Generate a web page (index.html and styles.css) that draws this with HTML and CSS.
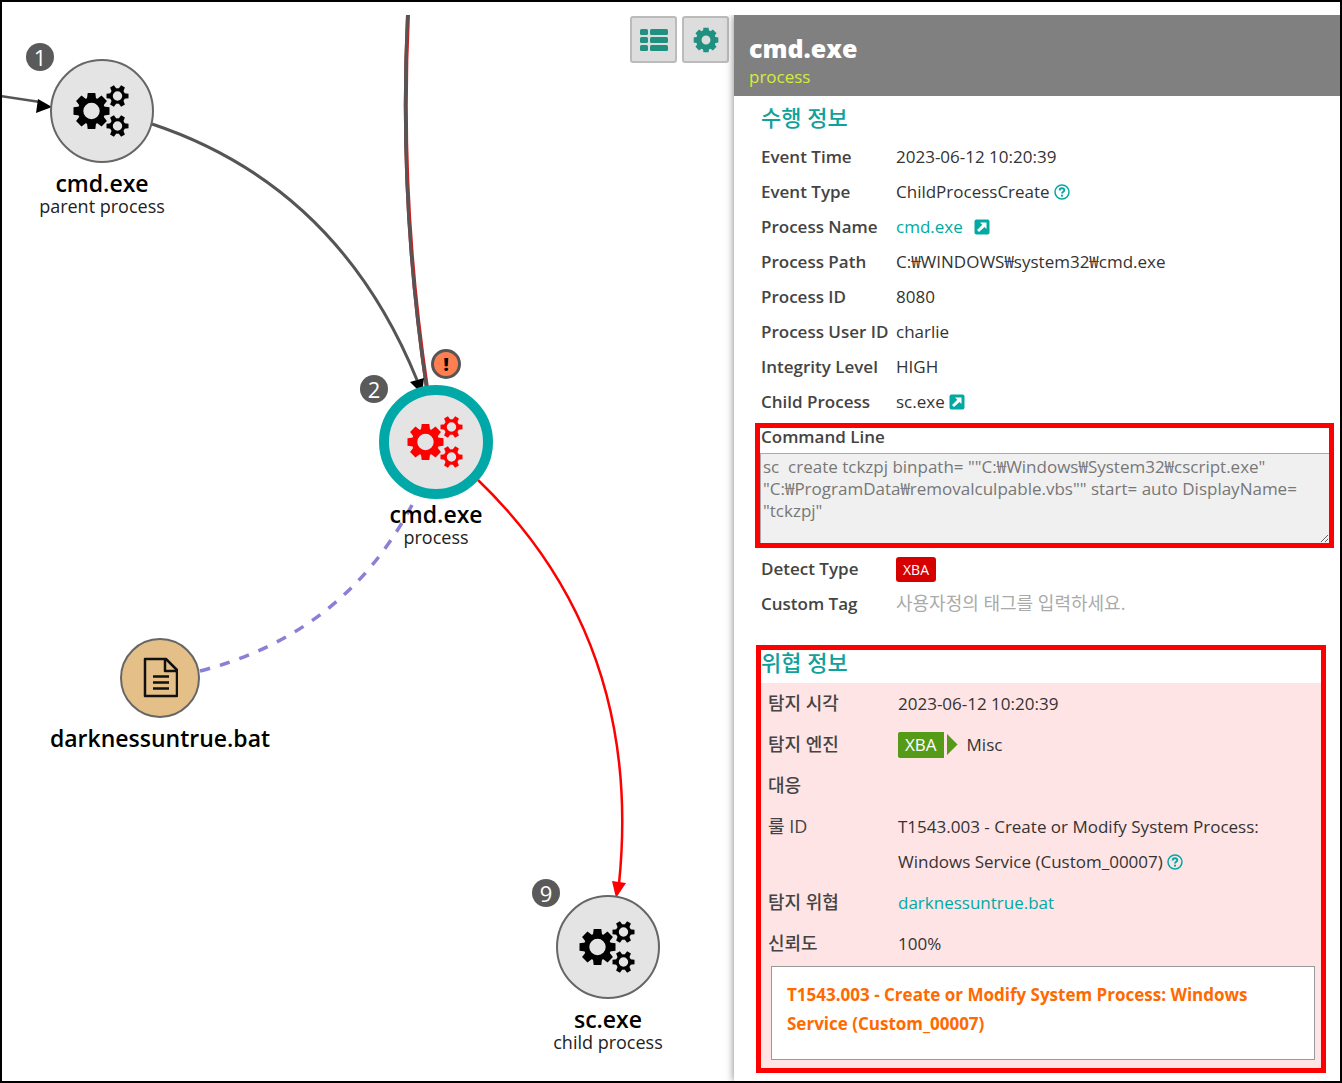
FILE: index.html
```html
<!DOCTYPE html>
<html lang="ko">
<head>
<meta charset="utf-8">
<title>cmd.exe</title>
<meta name="viewport" content="width=device-width, initial-scale=1">
<link rel="stylesheet" href="styles.css">
</head>
<body>
<svg class="sprite" aria-hidden="true">
  <defs>
    <path id="tooth-l" d="M-4.6 -12 L-3.8 -18 H3.8 L4.6 -12 Z"/>
    <path id="tooth-s" d="M-2.8 -6.500 L-2.200 -11 H2.200 L2.800 -6.500 Z"/>
    <g id="gear-s">
      <circle r="6.200" fill="none" stroke="currentColor" stroke-width="3"/>
      <use href="#tooth-s" transform="rotate(30)"/><use href="#tooth-s" transform="rotate(90)"/>
      <use href="#tooth-s" transform="rotate(150)"/><use href="#tooth-s" transform="rotate(210)"/>
      <use href="#tooth-s" transform="rotate(270)"/><use href="#tooth-s" transform="rotate(330)"/>
    </g>
    <g id="gear-l">
      <circle r="10.900" fill="none" stroke="currentColor" stroke-width="5.400"/>
      <use href="#tooth-l"/><use href="#tooth-l" transform="rotate(45)"/>
      <use href="#tooth-l" transform="rotate(90)"/><use href="#tooth-l" transform="rotate(135)"/>
      <use href="#tooth-l" transform="rotate(180)"/><use href="#tooth-l" transform="rotate(225)"/>
      <use href="#tooth-l" transform="rotate(270)"/><use href="#tooth-l" transform="rotate(315)"/>
    </g>
    <symbol id="gears" viewBox="0 0 56 52" overflow="visible">
      <g fill="currentColor">
        <use href="#gear-l" x="17.500" y="26"/>
        <use href="#gear-s" x="43.500" y="11"/>
        <use href="#gear-s" x="43.500" y="41"/>
      </g>
    </symbol>
    <symbol id="help" viewBox="0 0 16 16">
      <circle cx="8" cy="8" r="7" fill="none" stroke="currentColor" stroke-width="1.500"/>
      <path d="M5.700 6.500 C5.700 3.400 10.400 3.500 10.300 6.300 C10.200 7.900 8 7.800 8 9.600" fill="none" stroke="currentColor" stroke-width="1.900"/>
      <rect x="7" y="10.700" width="2" height="1.900" fill="currentColor"/>
    </symbol>
    <symbol id="open" viewBox="0 0 16 16">
      <rect x="0.500" y="0.500" width="15" height="15" rx="2" fill="currentColor"/>
      <path d="M6 3.500 H12.500 V10 L10.500 8 L5 13 L3 11 L8.300 5.800 Z" fill="#fff"/>
    </symbol>
  </defs>
</svg>

<main class="viewer">
  <section class="graph" aria-label="Process graph">
    <svg class="edges" viewBox="2 15 732 1066" width="732" height="1066" fill="none" aria-hidden="true">
      <path d="M0 96 L40 102" stroke="#555" stroke-width="2.500"/>
      <path d="M52 107 L36 113 L38 99 Z" fill="#000"/>
      <path d="M152 124 Q338 186 417 380" stroke="#555" stroke-width="3"/>
      <path d="M408 15 Q399 200 427 388" stroke="#d02020" stroke-width="4"/>
      <path d="M407.500 15 Q398.500 200 426.500 388" stroke="#555" stroke-width="3"/>
      <path d="M422 394 L410 382 L424 378 Z" fill="#000"/>
      <path d="M478 480 Q644 640 619 884" stroke="#f00" stroke-width="2.500"/>
      <path d="M616 898 L612 881 L626 883 Z" fill="#f00"/>
      <path d="M200 671 Q344 634 412 505" pathLength="270" stroke="#8a80d5" stroke-width="3.500" stroke-dasharray="10 10"/>
    </svg>

    <article class="node node-parent">
      <span class="disc"><svg class="gears"><use href="#gears"/></svg></span>
      <h2>cmd.exe</h2><p>parent process</p>
      <span class="count">1</span>
    </article>
    <article class="node node-current">
      <span class="disc"><svg class="gears"><use href="#gears"/></svg></span>
      <h2>cmd.exe</h2><p>process</p>
      <span class="count">2</span>
      <span class="alert">!</span>
    </article>
    <article class="node node-file">
      <span class="disc">
        <svg class="doc" viewBox="-1 0 36 42" fill="none" stroke="#111" stroke-width="2.500" stroke-linejoin="round">
          <path d="M2 2 H23 L34 13 V39 H2 Z"/><path d="M22 2 V14 H34"/>
          <path d="M10 19.500 H26 M10 25.500 H26 M10 31.500 H26"/>
        </svg>
      </span>
      <h2>darknessuntrue.bat</h2>
    </article>
    <article class="node node-child">
      <span class="disc"><svg class="gears"><use href="#gears"/></svg></span>
      <h2>sc.exe</h2><p>child process</p>
      <span class="count">9</span>
    </article>

    <div class="tools">
      <button type="button" aria-label="List">
        <svg width="28" height="24" viewBox="0 0 28 24" fill="currentColor">
          <rect y="1" width="8" height="6" rx="1.500"/><rect x="10" y="1" width="18" height="6" rx="1.500"/>
          <rect y="9" width="8" height="6" rx="1.500"/><rect x="10" y="9" width="18" height="6" rx="1.500"/>
          <rect y="17" width="8" height="6" rx="1.500"/><rect x="10" y="17" width="18" height="6" rx="1.500"/>
        </svg>
      </button>
      <button type="button" aria-label="Settings">
        <svg width="26" height="26" viewBox="-19 -19 38 38" fill="currentColor">
          <circle r="10.500" fill="none" stroke="currentColor" stroke-width="8"/>
          <use href="#gear-l"/>
        </svg>
      </button>
    </div>
  </section>

  <aside class="panel">
    <header class="panel-head">
      <h1>cmd.exe</h1>
      <p>process</p>
    </header>

    <section class="info">
      <h2 class="title">수행 정보</h2>
      <dl class="fields">
        <div><dt>Event Time</dt><dd>2023-06-12 10:20:39</dd></div>
        <div><dt>Event Type</dt><dd>ChildProcessCreate <button type="button" class="icon" aria-label="Help"><svg><use href="#help"/></svg></button></dd></div>
        <div><dt>Process Name</dt><dd class="spaced"><a href="#">cmd.exe</a> <a href="#" class="icon" aria-label="Open process"><svg><use href="#open"/></svg></a></dd></div>
        <div><dt>Process Path</dt><dd>C:₩WINDOWS₩system32₩cmd.exe</dd></div>
        <div><dt>Process ID</dt><dd>8080</dd></div>
        <div><dt>Process User ID</dt><dd>charlie</dd></div>
        <div><dt>Integrity Level</dt><dd>HIGH</dd></div>
        <div><dt>Child Process</dt><dd>sc.exe <a href="#" class="icon" aria-label="Open child process"><svg><use href="#open"/></svg></a></dd></div>
      </dl>

      <div class="command marked">
        <label for="command">Command Line</label>
        <textarea id="command" readonly>sc  create tckzpj binpath= ""C:₩Windows₩System32₩cscript.exe"
"C:₩ProgramData₩removalculpable.vbs"" start= auto DisplayName=
"tckzpj"</textarea>
      </div>

      <dl class="fields">
        <div><dt>Detect Type</dt><dd><span class="tag">XBA</span></dd></div>
        <div><dt><label for="custom-tag">Custom Tag</label></dt><dd><input id="custom-tag" type="text" placeholder="사용자정의 태그를 입력하세요."></dd></div>
      </dl>
    </section>

    <section class="threat marked">
      <h2 class="title">위협 정보</h2>
      <div class="threat-body">
        <dl class="threat-fields">
          <div><dt>탐지 시각</dt><dd>2023-06-12 10:20:39</dd></div>
          <div><dt>탐지 엔진</dt><dd class="engine"><span class="engine-tag">XBA</span><span class="engine-tip"></span>Misc</dd></div>
          <div><dt>대응</dt><dd></dd></div>
          <div><dt>룰 ID</dt><dd>T1543.003 - Create or Modify System Process: Windows Service (Custom_00007) <button type="button" class="icon" aria-label="Help"><svg><use href="#help"/></svg></button></dd></div>
          <div><dt>탐지 위협</dt><dd><a href="#">darknessuntrue.bat</a></dd></div>
          <div><dt>신뢰도</dt><dd>100%</dd></div>
        </dl>
        <p class="rule">T1543.003 - Create or Modify System Process: Windows Service (Custom_00007)</p>
      </div>
    </section>
  </aside>
</main>
</body>
</html>
```
FILE: styles.css
```css
* { box-sizing: border-box; }

body {
  margin: 0;
  font: 400 17px/22px "Open Sans", "Noto Sans CJK KR", sans-serif;
  color: #333;
  background: #fff;
}

h1, h2, p, dl, dd { margin: 0; }
a { color: #00a9a4; text-decoration: none; }
button, input, textarea { font: inherit; }
.sprite { position: absolute; width: 0; height: 0; }

.viewer {
  display: grid;
  grid-template-columns: minmax(0, 732fr) minmax(0, 606fr);
  min-height: 100vh;
  padding-top: 13px;
  border: 2px solid #000;
}

/* graph canvas */
.graph { position: relative; overflow: hidden; }
.edges { position: absolute; left: 0; top: 0; }

.node {
  position: absolute;
  display: flex;
  flex-direction: column;
  align-items: center;
  width: 240px;
  color: #000;
  text-align: center;
}
.node-parent { left: -20px; top: 44px; }
.node-current { left: 314px; top: 370px; }
.node-file { left: 38px; top: 623px; }
.node-child { left: 486px; top: 880px; }

.disc {
  display: grid;
  place-items: center;
  width: 104px;
  height: 104px;
  margin-bottom: 7px;
  border: 2px solid #666;
  border-radius: 50%;
  background: #e4e4e4;
}
.node-current .disc {
  width: 114px;
  height: 114px;
  margin-bottom: 2px;
  border: 10px solid #00a9a7;
  color: #f00;
}
.node-file .disc {
  width: 80px;
  height: 80px;
  background: #e4bf87;
}
.gears { width: 56px; height: 52px; overflow: visible; }
.doc { width: 36px; height: 42px; }

.node h2 { font-size: 23px; font-weight: 600; line-height: 26px; }
.node p { font-size: 18px; line-height: 20px; color: #222; }

.count, .alert {
  position: absolute;
  display: grid;
  place-items: center;
  border-radius: 50%;
}
.count {
  left: 44px;
  top: -16px;
  width: 28px;
  height: 28px;
  background: #5a5a5a;
  color: #fff;
  font-size: 22px;
}
.node-current .count { top: -10px; }
.alert {
  left: 115px;
  top: -36px;
  width: 30px;
  height: 30px;
  border: 3px solid #555;
  background: #ff7f50;
  font-size: 18px;
  font-weight: 800;
}

.tools {
  display: flex;
  justify-content: flex-end;
  gap: 5px;
  padding: 1px 5px 0 0;
}
.tools button {
  position: relative;
  display: grid;
  place-items: center;
  width: 47px;
  height: 47px;
  padding: 0;
  border: 2px solid #bbb;
  border-radius: 3px;
  background: #ddd;
  color: #209080;
}

/* detail panel */
.panel {
  position: relative;
  padding-bottom: 8px;
  background: #fff;
  box-shadow: 0 0 8px rgba(0, 0, 0, .5);
  clip-path: inset(0 0 0 -12px);
}
.panel-head {
  padding: 16px 15px 8px;
  background: #808080;
  color: #fff;
}
.panel-head h1 { font-size: 25px; font-weight: 800; line-height: 34px; }
.panel-head p { line-height: 23px; color: #d3ee3a; }

.info { padding: 9px 6px 24px 21px; }
.title {
  font-size: 22px;
  font-weight: 500;
  line-height: 24px;
  color: #10a19c;
}
.info .title { padding: 0 0 10px 6px; }

.fields > div {
  display: grid;
  grid-template-columns: 135px minmax(0, 1fr);
  padding-left: 6px;
  line-height: 35px;
}
dt, .command label { font-weight: 600; color: #444; white-space: nowrap; }
.spaced { display: flex; gap: 11px; }

.icon {
  display: inline-block;
  padding: 0;
  border: 0;
  background: none;
  color: #00a9a4;
  line-height: 16px;
}
.icon svg { display: block; width: 16px; height: 16px; }
.fields .icon, .threat .icon { vertical-align: -2px; }
.spaced .icon { align-self: center; }

.marked { border: 5px solid #f00; }
.command { margin: 4px 0 3px; }
.command label { display: block; padding: 0 1px 8px; line-height: 17px; }
.command textarea {
  display: block;
  width: 100%;
  height: 90px;
  padding: 2px;
  border: solid #aaa;
  border-width: 1px 0 0 1px;
  outline: 0;
  background: #f0f0f0;
  color: #777;
}

.tag {
  display: inline-block;
  padding: 0 7px;
  border-radius: 3px;
  background: #d60000;
  color: #fff;
  font-size: 14px;
  line-height: 25px;
}
.fields input {
  width: 100%;
  height: 30px;
  padding: 0;
  border: 0;
  background: none;
  font-size: 18px;
}
.fields input::placeholder { color: #aaa; opacity: 1; }

.threat { margin: 0 14px 0 22px; }
.threat .title { padding-bottom: 9px; }
.threat-body { padding-bottom: 8px; background: #ffe4e5; }
.threat-fields > div {
  display: grid;
  grid-template-columns: 130px minmax(0, 1fr);
  padding: 3px 40px 3px 7px;
  line-height: 35px;
}
.threat-fields dt { font-size: 18px; font-weight: 500; }
.engine { display: flex; align-items: center; }
.engine-tag {
  padding: 0 7px;
  border-radius: 2px 0 0 2px;
  background: #559b18;
  color: #fff;
  line-height: 26px;
}
.engine-tip {
  width: 11px;
  height: 22px;
  margin: 0 9px 0 3px;
  background: #559b18;
  clip-path: polygon(0 0, 100% 50%, 0 100%);
}
.rule {
  min-height: 94px;
  margin: 2px 6px 0 10px;
  padding: 13px 30px 13px 15px;
  border: 1px solid #999;
  background: #fff;
  color: #ff6a00;
  font-weight: 700;
  line-height: 29px;
}
```
